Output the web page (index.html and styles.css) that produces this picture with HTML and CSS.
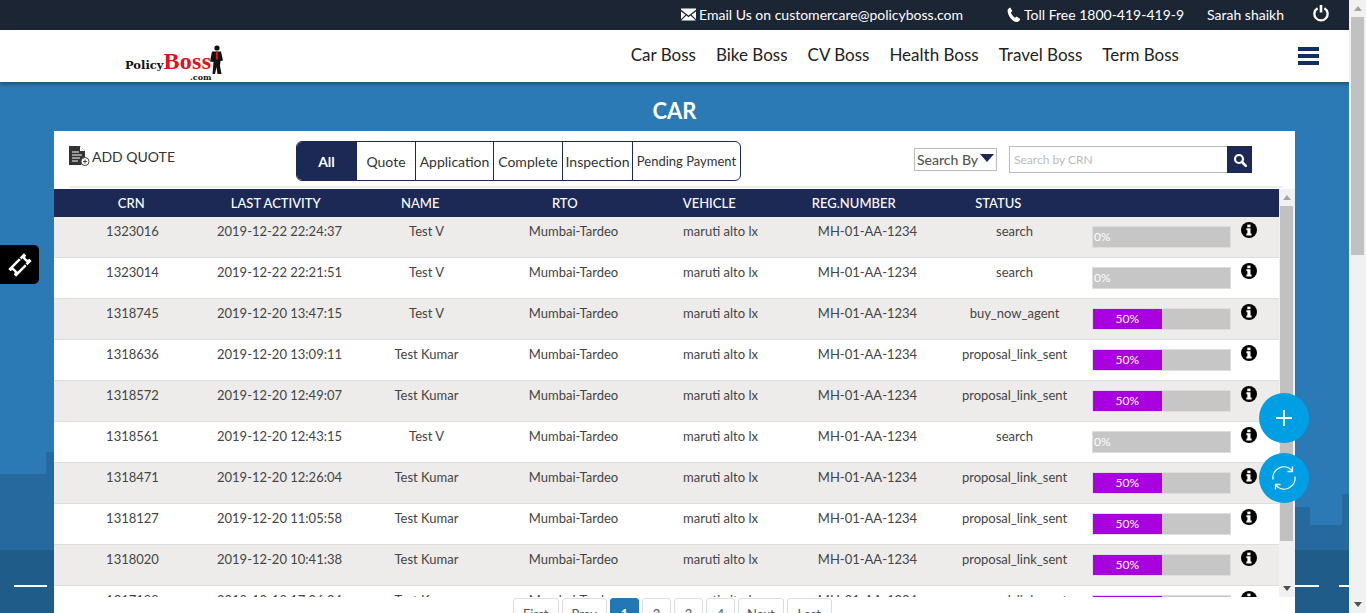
FILE: index.html

```html
<!DOCTYPE html>
<html lang="en">
<head>
  <meta charset="UTF-8" />
  <title>PolicyBoss - Car</title>
  <link rel="stylesheet" href="styles.css">
</head>
<body>
<svg class="defs" width="0" height="0">
  <symbol id="info" viewBox="0 0 16 16">
    <circle cx="8" cy="8" r="8" fill="#000"/>
    <rect x="6.3" y="2.6" width="3.2" height="2.6" fill="#fff"/>
    <path d="M5.4 6.3h4.1v5.2h1.1v2H5.4v-2h1v-3.2h-1z" fill="#fff"/>
  </symbol>
</svg>

<div class="shell">
  <div class="page">
    <svg class="skyline" width="1349" height="163" viewBox="0 0 1349 163">
      <path d="M0 24h46V2h8v98H0z" fill="#26699f"/>
      <path d="M1295 57h15v18h32V44h7v56h-54z" fill="#26699f"/>
      <rect x="0" y="100" width="1349" height="63" fill="#205c8a"/>
      <rect x="14" y="135" width="33" height="2" fill="#fff"/>
      <rect x="1295" y="135" width="24" height="2" fill="#fff"/>
      <rect x="1339" y="135" width="10" height="2" fill="#fff"/>
    </svg>

    <div class="top-bar">
      <span class="top-item email">
        <svg width="15" height="13" viewBox="0 0 16 13"><path d="M0 0h16v1.5L8 7.5 0 1.500zM0 3.200l4.800 3.600L0 11.500zM16 3.200v8.300l-4.800-4.700zM5.800 7.600 8 9.300l2.200-1.700 5.600 5.400H.2z" fill="#fff"/></svg>
        Email Us on customercare@policyboss.com
      </span>
      <span class="top-item phone">
        <svg width="14" height="15" viewBox="0 0 14 15"><path d="M3.300.5 5.300 4 3.900 5.500c.6 1.900 2.200 4 4.100 5.200l1.500-1.200 3.700 2.500c-.4 1.600-1.700 3-3.200 3C5.100 15 .6 8 .6 3.700.6 2.200 1.800.9 3.300.5z" fill="#fff"/></svg>
        Toll Free 1800-419-419-9
      </span>
      <span class="top-item user">Sarah shaikh</span>
      <svg class="power" width="16" height="18" viewBox="0 0 16 18"><path d="M4.600 4.200a6.600 6.600 0 1 0 6.800 0" fill="none" stroke="#fff" stroke-width="2.300"/><path d="M8 1v7.500" stroke="#fff" stroke-width="2.600"/></svg>
    </div>

    <div class="nav-bar">
      <div class="logo">
        <span class="logo-policy">Policy</span><span class="logo-boss">Boss</span><span class="logo-com">.com</span>
        <svg class="logo-man" width="14" height="30" viewBox="0 0 14 30">
          <circle cx="7" cy="3" r="2.600" fill="#111"/>
          <path d="M2 6.500h9l2 9-2.500.5-.5 5 1.500 8H7.500L6.500 22 5 29H2.500L3.500 17 0 16.500z" fill="#111"/>
          <path d="M6 6.500h1.800l.2 7-1 1.500-1-1.500z" fill="#e2121c"/>
        </svg>
      </div>
      <a class="nav-link">Car Boss</a>
      <a class="nav-link">Bike Boss</a>
      <a class="nav-link">CV Boss</a>
      <a class="nav-link">Health Boss</a>
      <a class="nav-link">Travel Boss</a>
      <a class="nav-link">Term Boss</a>
      <div class="burger"><span></span><span></span><span></span></div>
    </div>

    <h1 class="page-title">CAR</h1>

    <div class="card">
      <div class="toolbar">
        <div class="add-quote">
          <svg width="21" height="20" viewBox="0 0 21 20">
            <path d="M0 0h11l5 5v10h-3.500v4H0z" fill="#333"/>
            <path d="M11 0v5h5z" fill="#fff"/>
            <path d="M3 6h7M3 9h10M3 12h8M3 15h6" stroke="#fff" stroke-width="1"/>
            <circle cx="16" cy="15.500" r="4" fill="#fff" stroke="#444" stroke-width="1"/>
            <path d="M14 15.500h4M16 13.500v4" stroke="#444" stroke-width="1"/>
          </svg>
          ADD QUOTE
        </div>
        <div class="tabs">
          <div class="tab active tab-all">All</div>
          <div class="tab tab-quote">Quote</div>
          <div class="tab tab-application">Application</div>
          <div class="tab tab-complete">Complete</div>
          <div class="tab tab-inspection">Inspection</div>
          <div class="tab tab-pending">Pending Payment</div>
        </div>
        <div class="search-by">Search By<span class="caret"></span></div>
        <div class="search-box">
          <input type="text" placeholder="Search by CRN" />
          <button class="search-btn">
            <svg width="14" height="14" viewBox="0 0 14 14"><circle cx="6" cy="6" r="4" fill="none" stroke="#fff" stroke-width="2.200"/><path d="M9 9l3.800 3.800" stroke="#fff" stroke-width="2.600" stroke-linecap="round"/></svg>
          </button>
        </div>
      </div>

      <div class="table-wrap">
        <div class="table-view">
          <div class="table-head">
            <div>CRN</div><div>LAST ACTIVITY</div><div>NAME</div><div>RTO</div><div>VEHICLE</div><div>REG.NUMBER</div><div>STATUS</div>
          </div>
          <div class="table-body">
            <div class="row">
              <div>1323016</div><div>2019-12-22 22:24:37</div><div>Test V</div><div>Mumbai-Tardeo</div><div>maruti alto lx</div><div>MH-01-AA-1234</div><div>search</div>
              <div class="bar"><div class="fill zero">0%</div></div>
              <svg class="info"><use href="#info"/></svg>
            </div>
            <div class="row">
              <div>1323014</div><div>2019-12-22 22:21:51</div><div>Test V</div><div>Mumbai-Tardeo</div><div>maruti alto lx</div><div>MH-01-AA-1234</div><div>search</div>
              <div class="bar"><div class="fill zero">0%</div></div>
              <svg class="info"><use href="#info"/></svg>
            </div>
            <div class="row">
              <div>1318745</div><div>2019-12-20 13:47:15</div><div>Test V</div><div>Mumbai-Tardeo</div><div>maruti alto lx</div><div>MH-01-AA-1234</div><div>buy_now_agent</div>
              <div class="bar"><div class="fill half">50%</div></div>
              <svg class="info"><use href="#info"/></svg>
            </div>
            <div class="row">
              <div>1318636</div><div>2019-12-20 13:09:11</div><div>Test Kumar</div><div>Mumbai-Tardeo</div><div>maruti alto lx</div><div>MH-01-AA-1234</div><div>proposal_link_sent</div>
              <div class="bar"><div class="fill half">50%</div></div>
              <svg class="info"><use href="#info"/></svg>
            </div>
            <div class="row">
              <div>1318572</div><div>2019-12-20 12:49:07</div><div>Test Kumar</div><div>Mumbai-Tardeo</div><div>maruti alto lx</div><div>MH-01-AA-1234</div><div>proposal_link_sent</div>
              <div class="bar"><div class="fill half">50%</div></div>
              <svg class="info"><use href="#info"/></svg>
            </div>
            <div class="row">
              <div>1318561</div><div>2019-12-20 12:43:15</div><div>Test V</div><div>Mumbai-Tardeo</div><div>maruti alto lx</div><div>MH-01-AA-1234</div><div>search</div>
              <div class="bar"><div class="fill zero">0%</div></div>
              <svg class="info"><use href="#info"/></svg>
            </div>
            <div class="row">
              <div>1318471</div><div>2019-12-20 12:26:04</div><div>Test Kumar</div><div>Mumbai-Tardeo</div><div>maruti alto lx</div><div>MH-01-AA-1234</div><div>proposal_link_sent</div>
              <div class="bar"><div class="fill half">50%</div></div>
              <svg class="info"><use href="#info"/></svg>
            </div>
            <div class="row">
              <div>1318127</div><div>2019-12-20 11:05:58</div><div>Test Kumar</div><div>Mumbai-Tardeo</div><div>maruti alto lx</div><div>MH-01-AA-1234</div><div>proposal_link_sent</div>
              <div class="bar"><div class="fill half">50%</div></div>
              <svg class="info"><use href="#info"/></svg>
            </div>
            <div class="row">
              <div>1318020</div><div>2019-12-20 10:41:38</div><div>Test Kumar</div><div>Mumbai-Tardeo</div><div>maruti alto lx</div><div>MH-01-AA-1234</div><div>proposal_link_sent</div>
              <div class="bar"><div class="fill half">50%</div></div>
              <svg class="info"><use href="#info"/></svg>
            </div>
            <div class="row">
              <div>1317188</div><div>2019-12-19 17:26:04</div><div>Test Kumar</div><div>Mumbai-Tardeo</div><div>maruti alto lx</div><div>MH-01-AA-1234</div><div>proposal_link_sent</div>
              <div class="bar"><div class="fill half">50%</div></div>
              <svg class="info"><use href="#info"/></svg>
            </div>
          </div>
        </div>
        <div class="scrollbar table-bar">
          <span class="arrow-up"></span>
          <span class="thumb"></span>
          <span class="arrow-down"></span>
        </div>
      </div>

      <div class="pager">
        <a class="wide">First</a>
        <a class="wide">Prev</a>
        <a class="current">1</a>
        <a>2</a>
        <a>3</a>
        <a>4</a>
        <a class="wide">Next</a>
        <a class="wide">Last</a>
      </div>
    </div>

    <div class="ticket-tab">
      <svg width="28" height="28" viewBox="0 0 28 28">
        <g transform="rotate(-45 14 14)">
          <path d="M3 8.500h22v3.200a2.300 2.300 0 0 0 0 4.600v3.200H3v-3.200a2.300 2.300 0 0 0 0-4.600z" fill="#fff"/>
          <rect x="7.500" y="11" width="13" height="6" fill="#000"/>
          <path d="M18.500 8.500v2.500M18.500 17v2.500" stroke="#000" stroke-width="1.200"/>
        </g>
      </svg>
    </div>
    <div class="fab fab-add">
      <svg width="18" height="18" viewBox="0 0 18 18"><path d="M9 1v16M1 9h16" stroke="#fff" stroke-width="1.800"/></svg>
    </div>
    <div class="fab fab-refresh">
      <svg width="26" height="26" viewBox="0 0 26 26">
        <path d="M2 14.500A11 11 0 0 1 21 5.500" fill="none" stroke="#fff" stroke-width="1.300"/>
        <path d="M24 11.500A11 11 0 0 1 5 20.500" fill="none" stroke="#fff" stroke-width="1.300"/>
        <path d="M21.500 1.500v5h-5M4.500 24.500v-5h5" fill="none" stroke="#fff" stroke-width="1.300"/>
      </svg>
    </div>
  </div>

  <div class="scrollbar page-bar">
    <span class="arrow-up"></span>
    <span class="thumb"></span>
    <span class="arrow-down"></span>
  </div>
</div>
</body>
</html>
```

FILE: styles.css

```css
* {
  box-sizing: border-box;
}

html, body {
  margin: 0;
  height: 100%;
  overflow: hidden;
}

body {
  font-family: "Lato", "Liberation Sans", sans-serif;
  font-size: 13px;
  color: #444;
}

.defs {
  position: absolute;
}

.shell {
  display: flex;
  height: 100%;
}

/* drawn scrollbars, the page one and the table one */
.scrollbar {
  display: flex;
  flex-direction: column;
  align-items: center;
  flex-shrink: 0;
  background-color: #f1f1f1;
}

.page-bar {
  width: 17px;
}

.table-bar {
  width: 16px;
}

.thumb {
  width: 13px;
  background-color: #c1c1c1;
}

.page-bar .thumb {
  height: 238px;
}

.table-bar .thumb {
  height: 335px;
  margin-right: 1px;
}

.arrow-up,
.arrow-down {
  width: 0;
  height: 0;
  border-left: 4.500px solid transparent;
  border-right: 4.500px solid transparent;
}

.arrow-up {
  margin: 6px 0;
  border-bottom: 5px solid #a3a3a3;
}

.arrow-down {
  margin-top: auto;
  margin-bottom: 6px;
  border-top: 5px solid #505050;
}

.page {
  position: relative;
  flex: 1;
  min-width: 0;
  overflow: hidden;
  background-color: #2c7ab5;
}

.skyline {
  position: absolute;
  left: 0;
  top: 450px;
}

/* top bar */
.top-bar {
  position: relative;
  display: flex;
  align-items: center;
  justify-content: flex-end;
  height: 30px;
  padding-right: 20px;
  padding-bottom: 2px;
  background-color: #1c2533;
  color: #fff;
  font-size: 14px;
}

.top-item {
  display: flex;
  align-items: center;
  gap: 3px;
  white-space: nowrap;
}

.top-item.phone {
  margin-left: 44px;
}

.top-item.user {
  margin-left: 23px;
}

.power {
  margin-left: 29px;
  margin-top: -3px;
}

/* nav */
.nav-bar {
  position: relative;
  display: flex;
  align-items: center;
  height: 52px;
  padding-left: 125px;
  padding-bottom: 3px;
  background-color: #fff;
  box-shadow: 0 2px 4px rgba(0,0,0,0.35);
}

.logo {
  position: relative;
  display: flex;
  align-items: baseline;
  width: 100px;
  margin-top: 13px;
  margin-right: auto;
  color: #111;
  font-family: "DejaVu Serif", serif;
  font-weight: bold;
}

.logo-policy {
  font-size: 11.500px;
}

.logo-boss {
  color: #e2121c;
  font-family: "Liberation Serif", serif;
  font-size: 24px;
  letter-spacing: 0.300px;
}

.logo-com {
  position: absolute;
  left: 65px;
  top: 24px;
  font-size: 8px;
}

.logo-man {
  position: absolute;
  left: 85px;
  top: -3px;
}

.nav-link {
  margin-left: 20px;
  color: #222;
  font-size: 17px;
  white-space: nowrap;
}

.burger {
  display: flex;
  flex-direction: column;
  gap: 3.500px;
  width: 21px;
  margin-top: 3px;
  margin-left: 119px;
  margin-right: 30px;
}

.burger span {
  height: 3.500px;
  background-color: #0f2f63;
}

.page-title {
  position: relative;
  margin: 0;
  height: 49px;
  line-height: 58px;
  color: #fff;
  font-size: 22px;
  font-weight: bold;
  text-align: center;
}

/* card */
.card {
  position: relative;
  width: 1241px;
  margin-left: 54px;
  background-color: #fff;
}

.toolbar {
  display: grid;
  grid-template-columns: 227px 618px 95px 243px;
  align-items: start;
  height: 57px;
  margin: 0 12px 1px 15px;
  border-bottom: 2px solid #eeeeee;
}

.add-quote {
  display: flex;
  align-items: center;
  gap: 2px;
  height: 20px;
  margin-top: 15px;
  color: #333;
  font-size: 14px;
}

.tabs {
  display: flex;
  justify-self: start;
  height: 40px;
  margin-top: 10px;
  overflow: hidden;
  border: 1px solid #1c2955;
  border-radius: 6px;
  color: #333;
  font-size: 14px;
}

.tab {
  display: flex;
  align-items: center;
  justify-content: center;
  white-space: nowrap;
  border-right: 1.500px solid #1c2955;
}

.tab:last-child {
  border-right: none;
}

.tab.active {
  background-color: #1c2955;
  color: #fff;
  font-weight: bold;
}

.tab-all { width: 60px; }
.tab-quote { width: 59px; }
.tab-application { width: 78px; }
.tab-complete { width: 69px; }
.tab-inspection { width: 70px; }
.tab-pending { width: 107px; font-size: 13px; }

.search-by {
  display: flex;
  align-items: center;
  width: 83px;
  height: 23px;
  margin-top: 17px;
  padding-left: 2px;
  border: 1px solid #bbb;
  color: #555;
  font-size: 14px;
  font-weight: 500;
  white-space: nowrap;
}

.caret {
  width: 0;
  height: 0;
  margin-left: 2px;
  margin-top: -4px;
  border-left: 7.500px solid transparent;
  border-right: 7.500px solid transparent;
  border-top: 8px solid #1c2955;
}

.search-box {
  display: flex;
  height: 27px;
  margin-top: 15px;
}

.search-box input {
  flex: 1;
  min-width: 0;
  padding: 0 4px;
  border: 1px solid #bbb;
  border-right: none;
  outline: none;
  font-family: inherit;
  font-size: 12px;
}

.search-box input::placeholder {
  color: #bbb;
}

.search-btn {
  display: flex;
  align-items: center;
  justify-content: center;
  width: 25px;
  padding: 0;
  border: none;
  background-color: #1c2955;
}

/* table */
.table-wrap {
  display: flex;
  height: 408px;
}

.table-view {
  flex: 1;
  min-width: 0;
  overflow: hidden;
}

.table-head {
  display: grid;
  grid-template-columns: repeat(7, 144.500px);
  align-items: center;
  height: 28px;
  padding-left: 5px;
  background-color: #1c2955;
  color: #fff;
  font-weight: 500;
  text-align: center;
}

.row {
  display: grid;
  grid-template-columns: repeat(7, 147px) 143px 26px;
  height: 41px;
  padding-top: 6px;
  padding-left: 5px;
  border-bottom: 1px solid #dedede;
  line-height: 17px;
  text-align: center;
}

.row:nth-child(odd) {
  background-color: #edeceb;
}

.bar {
  width: 139px;
  height: 22px;
  margin-top: 3px;
  margin-left: 4px;
  border: 1px solid #dedede;
  background-color: #c6c6c6;
}

.fill {
  height: 20px;
  color: #fff;
  font-size: 12px;
  line-height: 20px;
}

.fill.zero {
  width: 0;
  padding-left: 1px;
  text-align: left;
}

.fill.half {
  width: 50%;
  background-color: #a900e0;
}

.info {
  width: 16px;
  height: 16px;
  margin-top: -1px;
  margin-left: 10px;
}

/* pager */
.pager {
  display: flex;
  justify-content: center;
  gap: 3px;
  height: 40px;
  margin-top: 1px;
  padding-right: 4px;
}

.pager a {
  width: 29px;
  height: 34px;
  border: 1px solid #ddd;
  border-radius: 3px;
  background-color: #fff;
  color: #555;
  font-size: 13px;
  line-height: 30px;
  text-align: center;
}

.pager a.wide {
  width: 45.500px;
}

.pager a.current {
  border-color: #2277b5;
  background-color: #2277b5;
  color: #fff;
  font-weight: bold;
}

/* things floating over the page */
.ticket-tab {
  position: absolute;
  left: 0;
  top: 245px;
  display: flex;
  align-items: center;
  justify-content: center;
  width: 39px;
  height: 39px;
  border-radius: 0 5px 5px 0;
  background-color: #000;
}

.fab {
  position: absolute;
  left: 1259px;
  display: flex;
  align-items: center;
  justify-content: center;
  width: 50px;
  height: 50px;
  border-radius: 50%;
  background-color: #009fe3;
}

.fab-add {
  top: 393px;
}

.fab-refresh {
  top: 453px;
}
```
